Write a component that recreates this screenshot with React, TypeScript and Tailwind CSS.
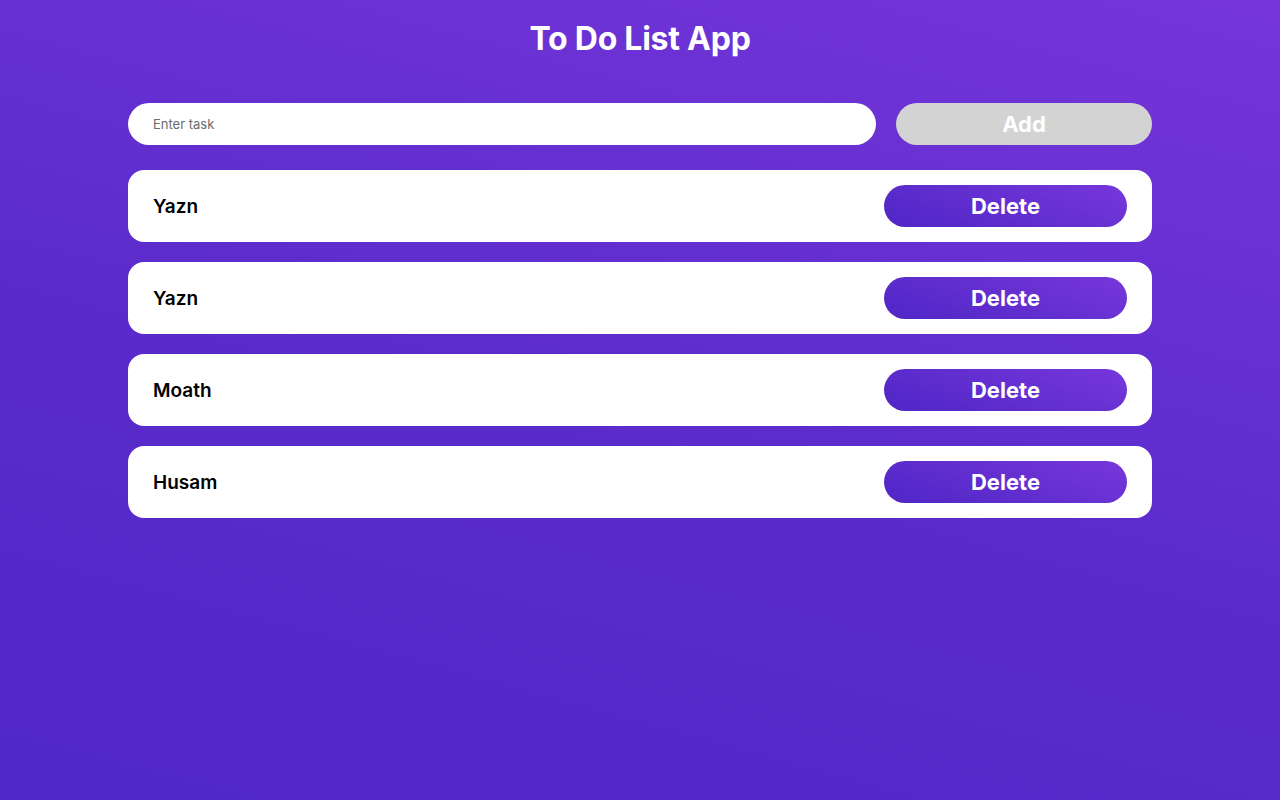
import React from "react";

const tasks = ["Yazn", "Yazn", "Moath", "Husam"];

export default function App() {
  return (
    <div
      className="min-h-[800px] w-full bg-[linear-gradient(15deg,#5027c7_0%,#5a2bcb_45%,#7535d9_100%)] flex flex-col items-center"
      style={{ fontFamily: "Inter, 'Noto Sans', sans-serif" }}
    >
      <h1 className="mt-[20px] h-[38px] text-[32px] leading-[38px] font-bold text-white tracking-[-0.25px]">
        To Do List App
      </h1>
      <div className="mt-[45px] w-[1024px] flex flex-col">
        <div className="flex gap-[20px]">
          <input
            placeholder="Enter task"
            className="h-[42px] w-[748px] rounded-full bg-white px-[25px] text-[13px] text-black placeholder:text-[#6b6b6b] outline-none"
          />
          <button className="h-[42px] flex-1 rounded-full bg-[#d3d3d3] text-white text-[22px] leading-[42px] font-bold">
            Add
          </button>
        </div>
        <div className="mt-[25px] flex flex-col gap-[20px]">
          {tasks.map((t, i) => (
            <div
              key={i}
              className="h-[72px] rounded-[16px] bg-white flex items-center justify-between pl-[25px] pr-[25px]"
            >
              <span className="pt-[2px] text-[19px] font-semibold text-black">{t}</span>
              <button className="h-[42px] w-[243px] rounded-full bg-[linear-gradient(20deg,#4f26c6_0%,#7737da_100%)] text-white text-[22px] leading-[42px] font-bold">
                Delete
              </button>
            </div>
          ))}
        </div>
      </div>
    </div>
  );
}
